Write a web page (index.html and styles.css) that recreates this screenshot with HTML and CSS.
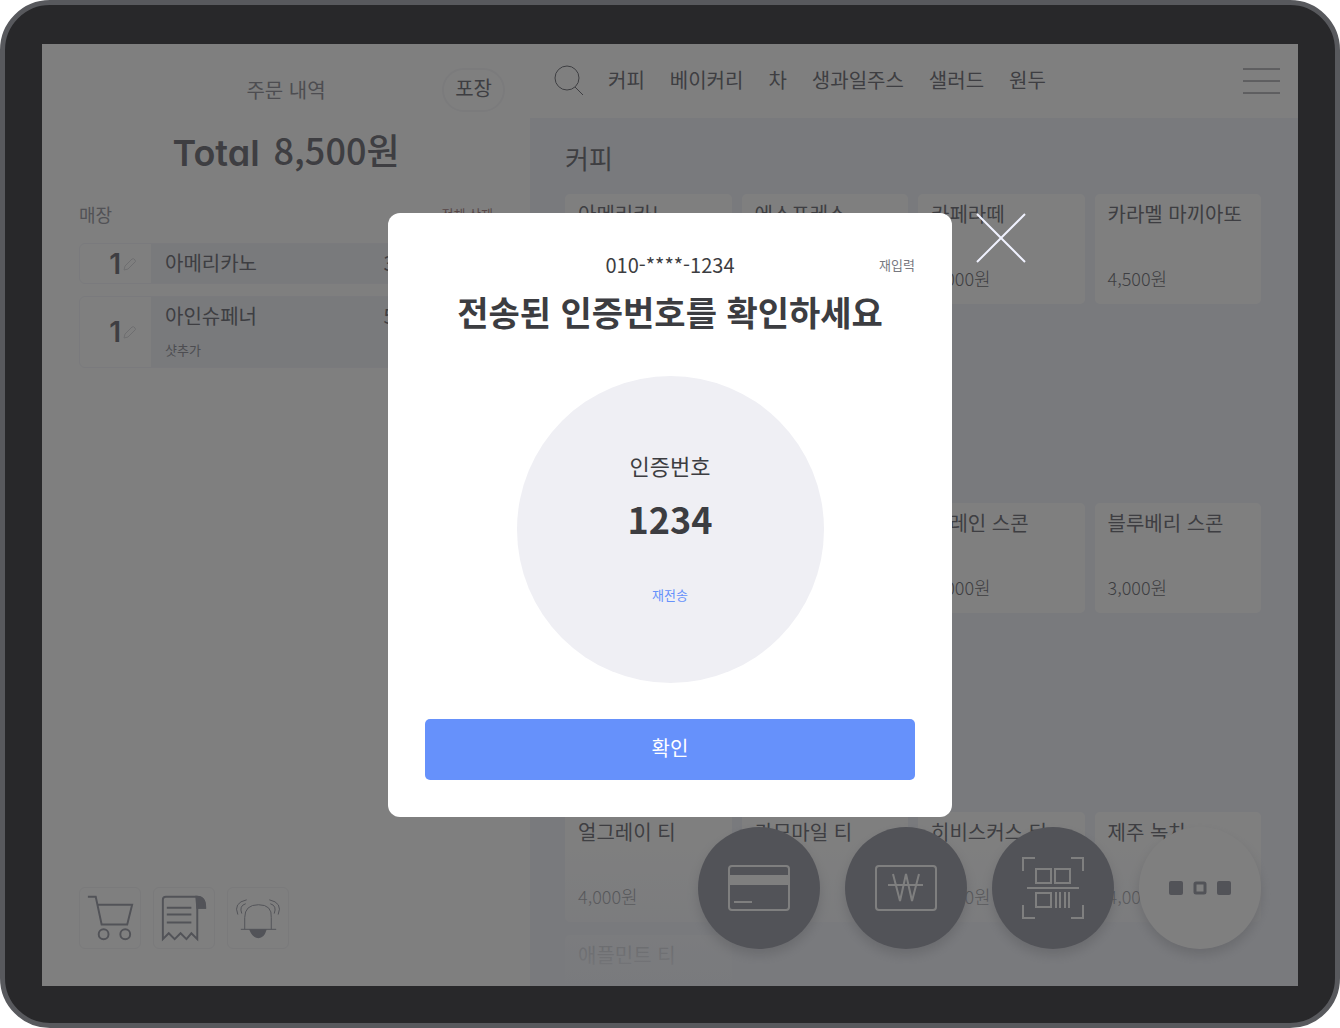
FILE: index.html
```html
<!DOCTYPE html>
<html lang="ko">
<head>
  <meta charset="UTF-8">
  <meta name="viewport" content="width=device-width, initial-scale=1.0">
  <title>주문 - 인증번호 확인</title>
  <link rel="stylesheet" href="styles.css">
</head>
<body>
  <div class="device">
    <div class="screen">

      <aside class="order">
        <div class="order-header">
          <h2>주문 내역</h2>
          <button type="button" class="pill">포장</button>
        </div>
        <div class="total"><span class="total-label">Total</span><strong>8,500원</strong></div>
        <div class="order-bar">
          <span>매장</span>
          <button type="button" class="clear">전체 삭제</button>
        </div>
        <ul class="order-list">
          <li class="order-item">
            <div class="qty">
              <span>1</span>
              <svg class="pencil" viewBox="0 0 14 14"><path d="M1 13l1-4 7-7q2-1 3 1t0 2l-7 7z"/></svg>
            </div>
            <div class="item-info">
              <div class="item-line"><span>아메리카노</span><span>3,500원</span></div>
            </div>
          </li>
          <li class="order-item">
            <div class="qty">
              <span>1</span>
              <svg class="pencil" viewBox="0 0 14 14"><path d="M1 13l1-4 7-7q2-1 3 1t0 2l-7 7z"/></svg>
            </div>
            <div class="item-info">
              <div class="item-line"><span>아인슈페너</span><span>5,000원</span></div>
              <div class="item-option">샷추가</div>
            </div>
          </li>
        </ul>
        <div class="order-tools">
          <button type="button" class="tool" aria-label="장바구니">
            <svg viewBox="0 0 61 61">
              <path d="M8 9h8l6 28h26l5-20H18"/>
              <circle cx="24" cy="47" r="5"/>
              <circle cx="46" cy="47" r="5"/>
            </svg>
          </button>
          <button type="button" class="tool" aria-label="영수증">
            <svg viewBox="0 0 61 61">
              <path class="fill" d="M43 9q9 0 9 11h-8z"/>
              <path d="M43 9H12q-3 0-3 3v40l6-6 6 6 6-6 6 6 5-6 6 6V9q8 0 8 11h-8M13 20h25M13 27h25M13 35h25"/>
            </svg>
          </button>
          <button type="button" class="tool" aria-label="직원 호출">
            <svg viewBox="0 0 61 61">
              <path class="fill" d="M23 43h15q-2 7-7 7t-8-7z"/>
              <path class="bell" d="M13 42h36M17 42V30q0-13 14-13t13 13v12M14 26q-3-8 4-10M10 27q-5-12 9-15M47 26q3-8-4-10M51 27q5-12-9-15"/>
            </svg>
          </button>
        </div>
      </aside>

      <main class="menu">
        <header class="menu-header">
          <button type="button" class="icon-btn" aria-label="검색">
            <svg class="search" viewBox="0 0 30 32"><circle cx="13" cy="13" r="12"/><path d="M21 22l8 8"/></svg>
          </button>
          <nav class="categories">
            <a href="#coffee">커피</a>
            <a href="#bakery">베이커리</a>
            <a href="#tea">차</a>
            <a href="#juice">생과일주스</a>
            <a href="#salad">샐러드</a>
            <a href="#beans">원두</a>
          </nav>
          <button type="button" class="icon-btn" aria-label="메뉴">
            <svg class="burger" viewBox="0 0 37 26"><path d="M0 1h37M0 13h37M0 25h37"/></svg>
          </button>
        </header>

        <div class="menu-body">
          <section class="group" id="coffee">
            <h3>커피</h3>
            <div class="cards">
              <button type="button" class="card"><span>아메리카노</span><small>3,500원</small></button>
              <button type="button" class="card"><span>에스프레소</span><small>3,000원</small></button>
              <button type="button" class="card"><span>카페라떼</span><small>4,000원</small></button>
              <button type="button" class="card"><span>카라멜 마끼아또</span><small>4,500원</small></button>
            </div>
          </section>
          <section class="group" id="bakery">
            <h3>베이커리</h3>
            <div class="cards">
              <button type="button" class="card"><span>크루아상</span><small>3,000원</small></button>
              <button type="button" class="card"><span>베이글</span><small>3,000원</small></button>
              <button type="button" class="card"><span>플레인 스콘</span><small>3,000원</small></button>
              <button type="button" class="card"><span>블루베리 스콘</span><small>3,000원</small></button>
            </div>
          </section>
          <section class="group" id="tea">
            <h3>차</h3>
            <div class="cards">
              <button type="button" class="card"><span>얼그레이 티</span><small>4,000원</small></button>
              <button type="button" class="card"><span>카모마일 티</span><small>4,000원</small></button>
              <button type="button" class="card"><span>히비스커스 티</span><small>4,000원</small></button>
              <button type="button" class="card"><span>제주 녹차</span><small>4,000원</small></button>
              <button type="button" class="card"><span>애플민트 티</span></button>
            </div>
          </section>
        </div>

        <div class="fade"></div>

        <div class="pay">
          <button type="button" class="pay-btn" aria-label="카드 결제">
            <svg viewBox="0 0 62 62">
              <rect x="1" y="9" width="60" height="44" rx="3"/>
              <path class="band" d="M1 19h60v8H1z"/>
              <path d="M6 45h18"/>
            </svg>
          </button>
          <button type="button" class="pay-btn" aria-label="현금 결제">
            <svg viewBox="0 0 62 62">
              <rect x="1" y="9" width="60" height="44" rx="3"/>
              <path d="M18 17l7 27 6-27 6 27 7-27M13 28h35"/>
            </svg>
          </button>
          <button type="button" class="pay-btn" aria-label="QR 결제">
            <svg viewBox="0 0 62 62">
              <path d="M1 14V1h12M49 1h12v13M1 48v13h12M49 61h12V48M5 31h52"/>
              <path d="M14 12h15v14H14zM33 12h15v14H33zM14 36h15v14H14zM34 35v16M38 35v16M43 35v16M47 35v16"/>
            </svg>
          </button>
          <button type="button" class="pay-btn more" aria-label="더 보기">
            <svg viewBox="0 0 62 62">
              <rect class="solid" x="0" y="24" width="14" height="14" rx="2"/>
              <rect x="26" y="26" width="10" height="10" rx="1"/>
              <rect class="solid" x="48" y="24" width="14" height="14" rx="2"/>
            </svg>
          </button>
        </div>
      </main>

      <div class="overlay">
        <form class="modal" role="dialog" aria-labelledby="modal-title">
          <div class="modal-top">
            <span class="phone">010-****-1234</span>
            <button type="button" class="retype">재입력</button>
          </div>
          <h1 id="modal-title">전송된 인증번호를 확인하세요</h1>
          <div class="code">
            <label for="code">인증번호</label>
            <input type="text" id="code" value="1234" maxlength="4" inputmode="numeric">
            <button type="button" class="resend">재전송</button>
          </div>
          <button type="submit" class="confirm">확인</button>
          <button type="button" class="close" aria-label="닫기">
            <svg viewBox="0 0 50 50"><path d="M1 1l48 48M49 1L1 49"/></svg>
          </button>
        </form>
      </div>

    </div>
  </div>
</body>
</html>
```
FILE: styles.css
```css
* {
  box-sizing: border-box;
}

body {
  margin: 0;
  background: #fff;
  color: #7c7d84;
  font-family: "Noto Sans CJK KR", sans-serif;
  font-size: 20px;
  line-height: 30px;
}

button {
  padding: 0;
  border: none;
  background: none;
  color: inherit;
  font: inherit;
  cursor: pointer;
}

svg {
  display: block;
  fill: none;
  stroke: currentColor;
}

h1, h2, h3, ul {
  margin: 0;
  padding: 0;
}

/* tablet */
.device {
  height: 100vh;
  padding: 39px 37px 37px;
  border: 5px solid #58595d;
  border-radius: 50px;
  background: #28282a;
}

.screen {
  position: relative;
  display: grid;
  grid-template-columns: 488fr 768fr;
  height: 100%;
  overflow: hidden;
  background: #fff;
}

/* order panel */
.order {
  display: flex;
  flex-direction: column;
  min-width: 0;
  padding: 24px 37px 37px;
}

.order-header {
  display: grid;
  grid-template-columns: 1fr auto 1fr;
  align-items: center;
  margin: 0 -12px;
}

.order-header h2 {
  grid-column: 2;
  color: #9a9ba2;
  font-size: 20px;
  font-weight: 400;
}

.pill {
  justify-self: end;
  padding: 3px 11px 7px;
  border: 2px solid #f6f6f9;
  border-radius: 22px;
}

.total {
  display: flex;
  justify-content: center;
  gap: 14px;
  margin-top: 13px;
  font-size: 36px;
  line-height: 48px;
}

.total strong {
  font-weight: 500;
}

.total-label {
  padding-top: 4px;
}

.total-label,
.qty {
  font-family: Inter, sans-serif;
  font-weight: 600;
  font-feature-settings: "cv11";
}

.order-bar {
  display: flex;
  justify-content: space-between;
  align-items: center;
  margin-top: 22px;
  color: #a4a5ac;
  font-size: 18px;
}

.clear {
  color: #b09090;
  font-size: 13px;
}

.order-list {
  display: flex;
  flex-direction: column;
  gap: 12px;
  margin-top: 14px;
  list-style: none;
}

.order-item {
  display: flex;
  overflow: hidden;
  border: 1px solid #f4f5fa;
  border-radius: 6px;
}

.qty {
  display: flex;
  justify-content: flex-end;
  align-items: center;
  width: 71px;
  padding-right: 14px;
  font-size: 28px;
}

.pencil {
  width: 14px;
  height: 14px;
  margin-left: 2px;
  color: #dcdde0;
}

.item-info {
  flex: 1;
  padding: 4px 40px 5px 14px;
  background: #f2f4f9;
}

.item-line {
  display: flex;
  justify-content: space-between;
}

.item-option {
  margin-top: 7px;
  color: #9a9ba2;
  font-size: 13px;
  line-height: 24px;
}

.order-tools {
  display: flex;
  gap: 12px;
  margin-top: auto;
}

.tool {
  border: 1px solid #f4f4f6;
  border-radius: 6px;
  color: #a4a6b0;
}

.tool svg {
  width: 60px;
  height: 60px;
  stroke-width: 2;
}

.tool .fill {
  fill: currentColor;
}

.tool .bell {
  stroke-width: 1;
}

/* menu panel */
.menu {
  position: relative;
  display: flex;
  flex-direction: column;
  min-width: 0;
  min-height: 0;
  background: #f3f5fb;
}

.menu-header {
  display: flex;
  align-items: center;
  height: 74px;
  padding: 0 18px 0 24px;
  background: #fff;
}

.search {
  width: 30px;
  height: 32px;
}

.burger {
  width: 37px;
  height: 26px;
}

.categories {
  display: flex;
  flex: 1;
  gap: 25px;
  padding: 0 0 3px 24px;
}

.categories a {
  color: inherit;
  text-decoration: none;
}

.menu-body {
  flex: 1;
  min-height: 0;
  padding: 0 37px 0 35px;
  overflow: hidden;
}

.group h3 {
  padding: 20px 0 16px;
  font-size: 26px;
  font-weight: 400;
  line-height: 40px;
}

.cards {
  display: grid;
  grid-template-columns: repeat(4, 1fr);
  grid-template-rows: 110px 110px;
  gap: 13px 10px;
}

.card {
  display: flex;
  flex-direction: column;
  justify-content: space-between;
  padding: 5px 13px 11px;
  border-radius: 5px;
  background: #fff;
  text-align: left;
  white-space: nowrap;
}

.card small {
  font-size: 18px;
  font-weight: 300;
}

.fade {
  position: absolute;
  right: 0;
  bottom: 0;
  left: 0;
  height: 150px;
  background: linear-gradient(rgba(243, 245, 251, 0), rgba(243, 245, 251, 0.8) 75%, #f3f5fb);
}

.pay {
  position: absolute;
  right: 37px;
  bottom: 37px;
  display: flex;
  gap: 25px;
}

.pay-btn {
  padding: 30px;
  border-radius: 50%;
  background: #a4a6b0;
  box-shadow: 0 6px 12px rgba(90, 92, 100, 0.2);
  color: #fff;
}

.pay-btn svg {
  width: 62px;
  height: 62px;
  stroke-width: 2;
}

.pay-btn .band {
  fill: currentColor;
}

.more {
  background: #fff;
  color: #a4a6b0;
}

.more svg {
  stroke-width: 3;
}

.more .solid {
  fill: currentColor;
  stroke: none;
}

/* verification modal */
.overlay {
  position: absolute;
  inset: 0;
  display: flex;
  justify-content: center;
  align-items: center;
  background: rgba(0, 0, 0, 0.5);
}

.modal {
  position: relative;
  display: flex;
  flex-direction: column;
  align-items: center;
  width: 100%;
  max-width: 564px;
  padding: 37px;
  border-radius: 12px;
  background: #fff;
  color: #3c3d41;
}

.modal-top {
  display: grid;
  grid-template-columns: 1fr auto 1fr;
  align-items: center;
  width: 100%;
}

.phone {
  grid-column: 2;
}

.retype {
  justify-self: end;
  color: #77787f;
  font-size: 13px;
}

.modal h1 {
  margin-top: 6px;
  font-size: 34px;
  font-weight: 700;
  line-height: 52px;
}

.code {
  display: flex;
  flex-direction: column;
  align-items: center;
  width: 307px;
  height: 307px;
  margin: 38px 0 36px;
  padding-top: 74px;
  border-radius: 50%;
  background: #efeff4;
}

.code label {
  font-size: 22px;
}

.code input {
  width: 120px;
  margin: 12px 0 36px;
  padding: 0;
  border: none;
  background: none;
  color: inherit;
  font: inherit;
  font-size: 36px;
  font-weight: 700;
  line-height: 52px;
  text-align: center;
}

.resend {
  color: #6691fb;
  font-size: 13px;
}

.confirm {
  width: 100%;
  height: 61px;
  padding-bottom: 4px;
  border-radius: 5px;
  background: #6691fb;
  color: #fff;
}

.close {
  position: absolute;
  top: 0;
  left: 100%;
  padding-left: 24px;
  color: #f0f2ff;
}

.close svg {
  width: 50px;
  height: 50px;
  stroke-width: 2;
}
```
